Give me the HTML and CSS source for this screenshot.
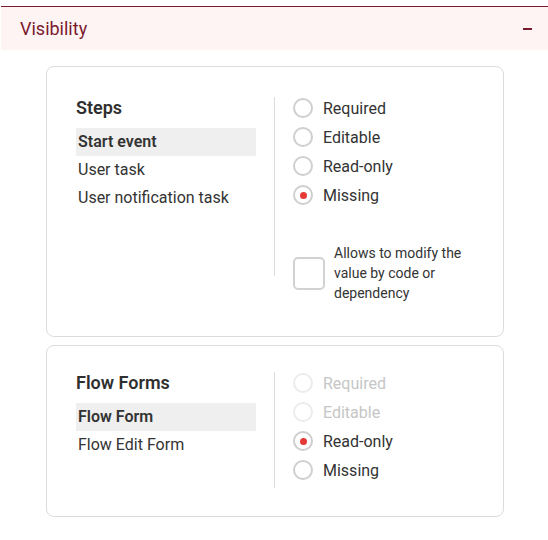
FILE: index.html
```html
<!DOCTYPE html>
<html>
<head>
<meta charset="utf-8">
<link rel="stylesheet" href="styles.css">
</head>
<body>
<div class="panel-header">
  <span class="panel-title">Visibility</span>
  <span class="collapse-icon"></span>
</div>
<div class="cards">
  <div class="card card-steps">
    <div class="list-col">
      <div class="list-title">Steps</div>
      <div class="list-item active">Start event</div>
      <div class="list-item">User task</div>
      <div class="list-item">User notification task</div>
    </div>
    <div class="divider divider-tall"></div>
    <div class="options-col">
      <div class="radio-row"><span class="radio"></span><span class="radio-label">Required</span></div>
      <div class="radio-row"><span class="radio"></span><span class="radio-label">Editable</span></div>
      <div class="radio-row"><span class="radio"></span><span class="radio-label">Read-only</span></div>
      <div class="radio-row"><span class="radio checked"></span><span class="radio-label">Missing</span></div>
      <div class="check-row">
        <span class="checkbox"></span>
        <span class="check-label">Allows to modify the value by code or dependency</span>
      </div>
    </div>
  </div>
  <div class="card card-forms">
    <div class="list-col">
      <div class="list-title">Flow Forms</div>
      <div class="list-item active">Flow Form</div>
      <div class="list-item">Flow Edit Form</div>
    </div>
    <div class="divider"></div>
    <div class="options-col">
      <div class="radio-row disabled"><span class="radio"></span><span class="radio-label">Required</span></div>
      <div class="radio-row disabled"><span class="radio"></span><span class="radio-label">Editable</span></div>
      <div class="radio-row"><span class="radio checked"></span><span class="radio-label">Read-only</span></div>
      <div class="radio-row"><span class="radio"></span><span class="radio-label">Missing</span></div>
    </div>
  </div>
</div>
</body>
</html>
```

FILE: styles.css
```css
* { box-sizing: border-box; }
html, body { margin: 0; padding: 0; background: #ffffff; }
body {
  font-family: Roboto, "Liberation Sans", sans-serif;
  color: #333333;
  width: 548px;
}
.panel-header {
  margin: 6px 0 0 1px;
  border-top: 1px solid #7a1a2d;
  background: #fff4f4;
  height: 44px;
  display: flex;
  align-items: center;
  justify-content: space-between;
  padding: 0 16px 0 19px;
}
.panel-title {
  font-size: 18px;
  color: #7a1a2d;
  line-height: 22px;
}
.collapse-icon {
  display: block;
  width: 9px;
  height: 2px;
  background: #7a1a2d;
}
.cards {
  margin: 16px 0 0 46px;
  width: 458px;
  display: flex;
  flex-direction: column;
  gap: 8px;
}
.card {
  border: 1px solid #dcdcdc;
  border-radius: 8px;
  display: flex;
  align-items: flex-start;
  padding: 30px 20px 33px 29px;
}
.card-forms {
  padding: 26px 20px 28px 29px;
}
.list-col {
  width: 198px;
  display: flex;
  flex-direction: column;
}
.list-title {
  font-size: 18px;
  font-weight: 600;
  line-height: 22px;
  margin-bottom: 9px;
  color: #2f2f2f;
}
.card-forms .list-title { margin-bottom: 9px; }
.list-item {
  width: 180px;
  height: 28px;
  line-height: 28px;
  font-size: 16px;
  padding-left: 2px;
  color: #333333;
}
.list-item.active {
  background: #efefef;
  font-weight: 600;
}
.divider {
  width: 1px;
  height: 116px;
  background: #dcdcdc;
  flex: none;
}
.divider-tall { height: 179px; }
.options-col {
  padding-left: 18px;
  display: flex;
  flex-direction: column;
}
.radio-row {
  display: flex;
  align-items: center;
  height: 22px;
  margin-bottom: 7px;
}
.radio {
  width: 20px;
  height: 20px;
  border: 2px solid #cfcfcf;
  border-radius: 50%;
  display: flex;
  align-items: center;
  justify-content: center;
  flex: none;
}
.radio.checked::after {
  content: "";
  width: 7px;
  height: 7px;
  border-radius: 50%;
  background: #e53935;
}
.radio-label {
  margin-left: 10px;
  font-size: 16px;
  color: #333333;
}
.radio-row.disabled .radio { border-color: #ececec; }
.radio-row.disabled .radio-label { color: #c6c6c6; }
.check-row {
  display: flex;
  align-items: center;
  margin-top: 30px;
}
.checkbox {
  width: 32px;
  height: 33px;
  border: 2px solid #d2d2d2;
  border-radius: 5px;
  flex: none;
}
.check-label {
  margin-left: 9px;
  font-size: 14px;
  line-height: 20px;
  width: 140px;
  color: #333333;
}
```
